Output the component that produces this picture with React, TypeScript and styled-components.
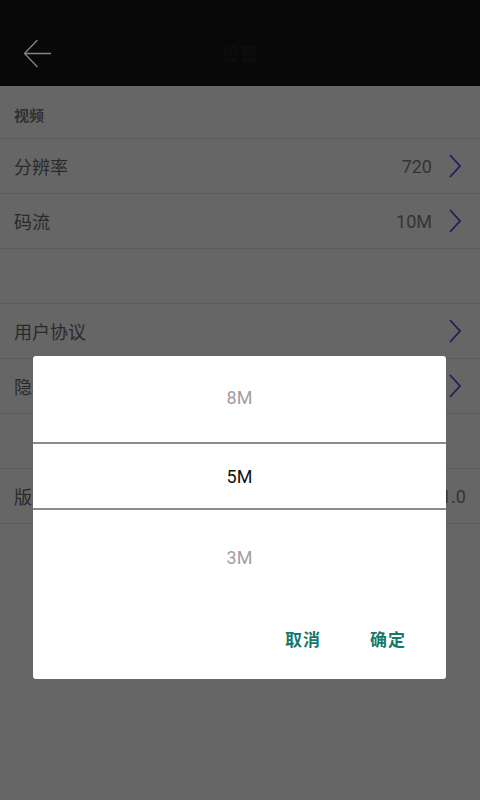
import React from 'react'
import styled, { createGlobalStyle } from 'styled-components'

const GlobalStyle = createGlobalStyle`
  html, body {
    margin: 0;
    padding: 0;
    width: 480px;
    height: 800px;
    overflow: hidden;
    background: #666666;
    font-family: Roboto, "Noto Sans CJK SC", sans-serif;
  }
`

const rows = [
  { type: 'section', label: '视频' },
  { type: 'item', label: '分辨率', value: '720', arrow: true },
  { type: 'item', label: '码流', value: '10M', arrow: true },
  { type: 'gap' },
  { type: 'item', label: '用户协议', arrow: true },
  { type: 'item', label: '隐私政策', arrow: true },
  { type: 'gap' },
  { type: 'item', label: '版本号', value: 'V1.0' },
]

const Chevron = () => (
  <svg width="14" height="26" viewBox="0 0 14 26">
    <path d="M2 2 L12 13 L2 24" fill="none" stroke="#1f1d5c" strokeWidth="1.8" />
  </svg>
)

const BackArrow = () => (
  <svg width="30" height="30" viewBox="0 0 30 30">
    <path d="M14.5 1 L1.5 14.5 L14.5 28 M1.5 14.5 L28 14.5" fill="none" stroke="#858585" strokeWidth="1.3" />
  </svg>
)

export default function App() {
  return (
    <>
      <GlobalStyle />
      <Screen>
        <Header>
          <BackButton>
            <BackArrow />
          </BackButton>
          <Title>设置</Title>
        </Header>

        <List>
          {rows.map((row, i) => {
            if (row.type === 'section') return <SectionRow key={i}>{row.label}</SectionRow>
            if (row.type === 'gap') return <GapRow key={i} />
            return (
              <ItemRow key={i}>
                <Label>{row.label}</Label>
                <Value hasArrow={!!row.arrow}>{row.value}</Value>
                {row.arrow && <Chevron />}
              </ItemRow>
            )
          })}
        </List>

        <Overlay>
          <Dialog>
            <PickerItem top>8M</PickerItem>
            <PickerLine />
            <PickerItem selected>5M</PickerItem>
            <PickerLine />
            <PickerItem bottom>3M</PickerItem>
            <Actions>
              <ActionButton>取消</ActionButton>
              <ActionButton>确定</ActionButton>
            </Actions>
          </Dialog>
        </Overlay>
      </Screen>
    </>
  )
}

const Screen = styled.div`
  position: relative;
  width: 480px;
  height: 800px;
  background: #666666;
`

const Header = styled.div`
  height: 86px;
  padding-top: 20px;
  box-sizing: border-box;
  background: #080808;
  display: flex;
  align-items: center;
  justify-content: center;
  position: relative;
`

const BackButton = styled.div`
  position: absolute;
  left: 23px;
  top: 39px;
  display: flex;
`

const Title = styled.div`
  font-size: 18px;
  color: #0e0e0e;
  font-weight: 500;
`

const List = styled.div`
  display: flex;
  flex-direction: column;
`

const SectionRow = styled.div`
  height: 53px;
  display: flex;
  align-items: center;
  padding: 5px 14px 0;
  font-size: 15px;
  font-weight: 700;
  color: #303030;
  border-bottom: 1px solid #5b5b5b;
  box-sizing: border-box;
`

const GapRow = styled.div`
  height: 55px;
  border-bottom: 1px solid #5b5b5b;
  box-sizing: border-box;
`

const ItemRow = styled.div`
  height: 55px;
  display: flex;
  align-items: center;
  padding: 0 18px 0 14px;
  border-bottom: 1px solid #5b5b5b;
  box-sizing: border-box;
`

const Label = styled.div`
  flex: 1;
  font-size: 18px;
  color: #2a2a2a;
`

const Value = styled.div<{ hasArrow: boolean }>`
  font-size: 18px;
  color: #333333;
  margin-right: ${({ hasArrow }) => (hasArrow ? '16px' : '-4px')};
`

const Overlay = styled.div`
  position: absolute;
  inset: 0;
  display: flex;
  justify-content: center;
  padding-top: 356px;
  box-sizing: border-box;
`

const Dialog = styled.div`
  width: 413px;
  height: 323px;
  margin-left: -1px;
  background: #ffffff;
  border-radius: 3px;
  display: flex;
  flex-direction: column;
  overflow: hidden;
`

const PickerItem = styled.div<{ selected?: boolean; top?: boolean; bottom?: boolean }>`
  height: ${({ top, bottom }) => (top ? '86px' : bottom ? '94px' : '64px')};
  padding-bottom: ${({ top }) => (top ? '4px' : '0')};
  box-sizing: border-box;
  display: flex;
  align-items: center;
  justify-content: center;
  font-size: 18px;
  color: ${({ selected }) => (selected ? '#111111' : '#a0a0a0')};
`

const PickerLine = styled.div`
  height: 2px;
  background: #8c8c8c;
`

const Actions = styled.div`
  height: 68px;
  display: flex;
  align-items: center;
  justify-content: flex-end;
  gap: 49px;
  padding-right: 40px;
  padding-bottom: 2px;
`

const ActionButton = styled.div`
  font-size: 17px;
  font-weight: 700;
  color: #17796b;
  letter-spacing: 1px;
`
